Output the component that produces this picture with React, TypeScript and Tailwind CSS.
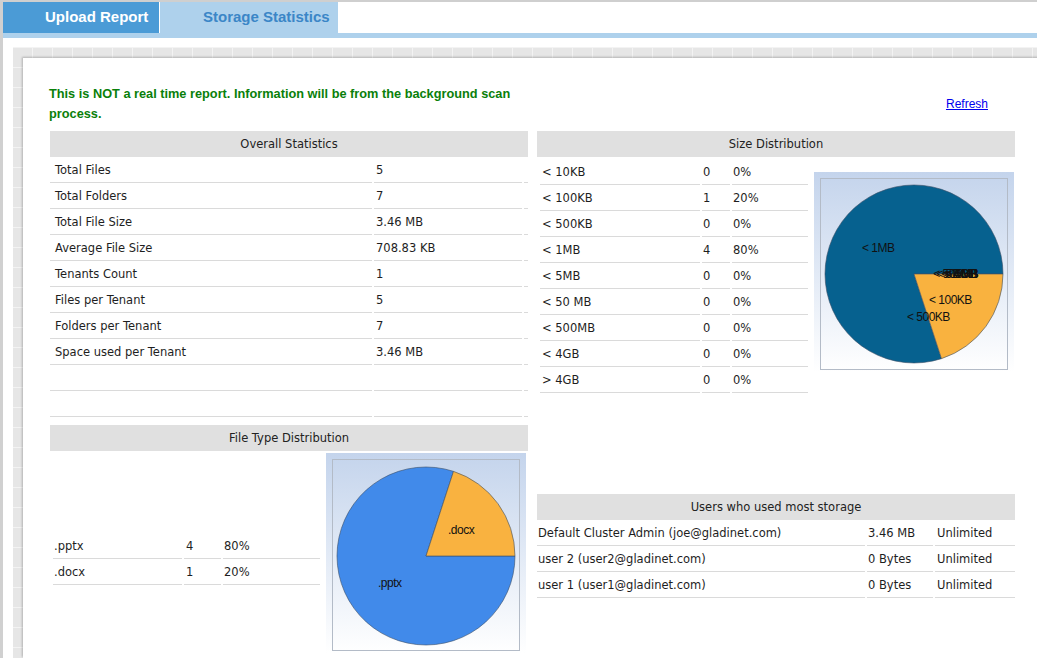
import React from "react";

const overall: string[][] = [
  ["Total Files", "5"],
  ["Total Folders", "7"],
  ["Total File Size", "3.46 MB"],
  ["Average File Size", "708.83 KB"],
  ["Tenants Count", "1"],
  ["Files per Tenant", "5"],
  ["Folders per Tenant", "7"],
  ["Space used per Tenant", "3.46 MB"],
  ["", ""],
  ["", ""],
];

const sizes: string[][] = [
  ["< 10KB", "0", "0%"],
  ["< 100KB", "1", "20%"],
  ["< 500KB", "0", "0%"],
  ["< 1MB", "4", "80%"],
  ["< 5MB", "0", "0%"],
  ["< 50 MB", "0", "0%"],
  ["< 500MB", "0", "0%"],
  ["< 4GB", "0", "0%"],
  ["> 4GB", "0", "0%"],
];

const types: string[][] = [
  [".pptx", "4", "80%"],
  [".docx", "1", "20%"],
];

const users: string[][] = [
  ["Default Cluster Admin (joe@gladinet.com)", "3.46 MB", "Unlimited"],
  ["user 2 (user2@gladinet.com)", "0 Bytes", "Unlimited"],
  ["user 1 (user1@gladinet.com)", "0 Bytes", "Unlimited"],
];

function Header({ title }: { title: string }) {
  return (
    <div className="h-[26px] bg-[#e0e0e0] flex items-center justify-center text-[#222] pt-px">
      {title}
    </div>
  );
}

const cellBase = "h-[26px] border-b border-[#dadada] flex items-center whitespace-nowrap pt-[3px]";

function ChartFrame({ id, children }: { id: string; children: React.ReactNode }) {
  return (
    <svg width="200" height="200" viewBox="0 0 200 200" className="shrink-0 block">
      <defs>
        <linearGradient id={id} x1="0" y1="0" x2="0" y2="1">
          <stop offset="0" stopColor="#c4d4ec" />
          <stop offset="1" stopColor="#ffffff" />
        </linearGradient>
      </defs>
      <rect x="0" y="0" width="200" height="200" fill={`url(#${id})`} />
      <rect x="6.5" y="6.5" width="187" height="191" fill="none" stroke="#b3bbc7" strokeWidth="1" />
      {children}
    </svg>
  );
}

const lab = {
  fontFamily: "'Liberation Sans', Arial, sans-serif",
  fontSize: 12,
  letterSpacing: -0.5,
  fill: "#111",
} as const;

function SizePie() {
  return (
    <ChartFrame id="gsize">
      <path d="M100,102 L127.5,186.64 A89,89 0 1 1 189,102 Z" fill="#06618f" stroke="#3c4f66" strokeWidth="0.6" />
      <path d="M100,102 L189,102 A89,89 0 0 1 127.5,186.64 Z" fill="#f9b23f" stroke="#3c4f66" strokeWidth="0.6" />
      <text x="48" y="80" {...lab}>&lt; 1MB</text>
      <text x="115" y="132" {...lab}>&lt; 100KB</text>
      <text x="93" y="149" {...lab}>&lt; 500KB</text>
      <text x="164" y="106" textAnchor="end" {...lab}>&lt; 10KB</text>
      <text x="164" y="106" textAnchor="end" {...lab}>&lt; 5MB</text>
      <text x="164" y="106" textAnchor="end" {...lab}>&lt; 50 MB</text>
      <text x="164" y="106" textAnchor="end" {...lab}>&lt; 500MB</text>
      <text x="162" y="106" textAnchor="end" {...lab}>&lt; 4GB</text>
      <text x="163" y="106" textAnchor="end" {...lab}>&gt; 4GB</text>
    </ChartFrame>
  );
}

function TypePie() {
  return (
    <ChartFrame id="gtype">
      <path d="M100,103 L127.5,18.36 A89,89 0 1 0 189,103 Z" fill="#418aea" stroke="#3c4f66" strokeWidth="0.6" />
      <path d="M100,103 L189,103 A89,89 0 0 0 127.5,18.36 Z" fill="#f9b240" stroke="#3c4f66" strokeWidth="0.6" />
      <text x="122" y="81" {...lab}>.docx</text>
      <text x="52" y="134" {...lab}>.pptx</text>
    </ChartFrame>
  );
}

export default function App() {
  return (
    <div className="w-[1037px] h-[658px] overflow-hidden bg-white border-l-[3px] border-[#d0d0d0] flex flex-col font-['DejaVu_Sans',sans-serif] text-[11.5px] text-[#1e1e1e]">
      {/* top line + tabs */}
      <div className="h-[2px] bg-[#cfcfcf] -ml-[3px] shrink-0" />
      <div className="flex h-[31px] shrink-0 font-['Liberation_Sans',Arial,sans-serif] font-bold text-[15px]">
        <div className="w-[156px] bg-[#4b9bd6] text-white flex items-center pl-[42px]">Upload Report</div>
        <div className="w-px bg-white" />
        <div className="w-[178px] bg-[#aed1ec] text-[#3b86c7] flex items-center pl-[43px]">Storage Statistics</div>
      </div>
      <div className="h-[5px] bg-[#aed1ec] shrink-0" />
      <div className="h-[9px] shrink-0" />
      {/* grid canvas */}
      <div className="flex-1 ml-[10px] pt-[11px] pl-[10px] bg-[#e6e6e6] bg-[linear-gradient(to_right,#f3f3f3_1px,transparent_1px),linear-gradient(to_bottom,#f3f3f3_1px,transparent_1px)] bg-size-[20px_20px] bg-position-[19px_0px] overflow-hidden">
        <div className="w-[1100px] h-full bg-white shadow-[-1px_-1px_2px_rgba(0,0,0,0.22)] pl-[27px] pt-[26px]">
          {/* notice row */}
          <div className="grid grid-cols-[478px_478px] gap-x-[9px]">
            <p className="-ml-px w-[476px] font-['Liberation_Sans',Arial,sans-serif] font-bold text-[12.75px] leading-[20px] text-[#0a800a]">
              This is NOT a real time report. Information will be from the background scan process.
            </p>
            <div className="flex justify-end items-center pr-[27px]">
              <a href="#" className="font-['Liberation_Sans',Arial,sans-serif] text-[12px] text-[#0000ee] underline">Refresh</a>
            </div>
          </div>

          <div className="grid grid-cols-[478px_478px] gap-x-[9px] mt-[7px]">
            {/* left column */}
            <div className="flex flex-col">
              <Header title="Overall Statistics" />
              {overall.map((r, i) => (
                <div key={i} className="flex gap-[2px]">
                  <div className={`${cellBase} w-[322px] pl-[5px]`}>{r[0]}</div>
                  <div className={`${cellBase} w-[148px] pl-[2px]`}>{r[1]}</div>
                  <div className={`${cellBase} w-[4px]`} />
                </div>
              ))}
              <div className="mt-[8px]">
                <Header title="File Type Distribution" />
              </div>
              <div className="flex items-start pl-[3px] pt-[2px] gap-[6px]">
                <div className="w-[267px] mt-[80px] flex flex-col">
                  {types.map((r, i) => (
                    <div key={i} className="flex gap-[2px]">
                      <div className={`${cellBase} w-[129px] pl-[1px]`}>{r[0]}</div>
                      <div className={`${cellBase} w-[37px] pl-[2px]`}>{r[1]}</div>
                      <div className={`${cellBase} w-[97px] pl-[1px]`}>{r[2]}</div>
                    </div>
                  ))}
                </div>
                <TypePie />
              </div>
            </div>

            {/* right column */}
            <div className="flex flex-col">
              <Header title="Size Distribution" />
              <div className="flex items-start pl-[3px] gap-[6px]">
                <div className="w-[268px] mt-[2px] flex flex-col">
                  {sizes.map((r, i) => (
                    <div key={i} className="flex gap-[2px]">
                      <div className={`${cellBase} w-[160px] pl-[2px]`}>{r[0]}</div>
                      <div className={`${cellBase} w-[28px] pl-[1px]`}>{r[1]}</div>
                      <div className={`${cellBase} w-[76px] pl-[1px]`}>{r[2]}</div>
                    </div>
                  ))}
                </div>
                <div className="mt-[15px]">
                  <SizePie />
                </div>
              </div>
              <div className="mt-[101px]">
                <Header title="Users who used most storage" />
                {users.map((r, i) => (
                  <div key={i} className="flex gap-[2px]">
                    <div className={`${cellBase} w-[328px] pl-[1px]`}>{r[0]}</div>
                    <div className={`${cellBase} w-[66px] pl-[1px]`}>{r[1]}</div>
                    <div className={`${cellBase} w-[80px] pl-[2px]`}>{r[2]}</div>
                  </div>
                ))}
              </div>
            </div>
          </div>
        </div>
      </div>
    </div>
  );
}
